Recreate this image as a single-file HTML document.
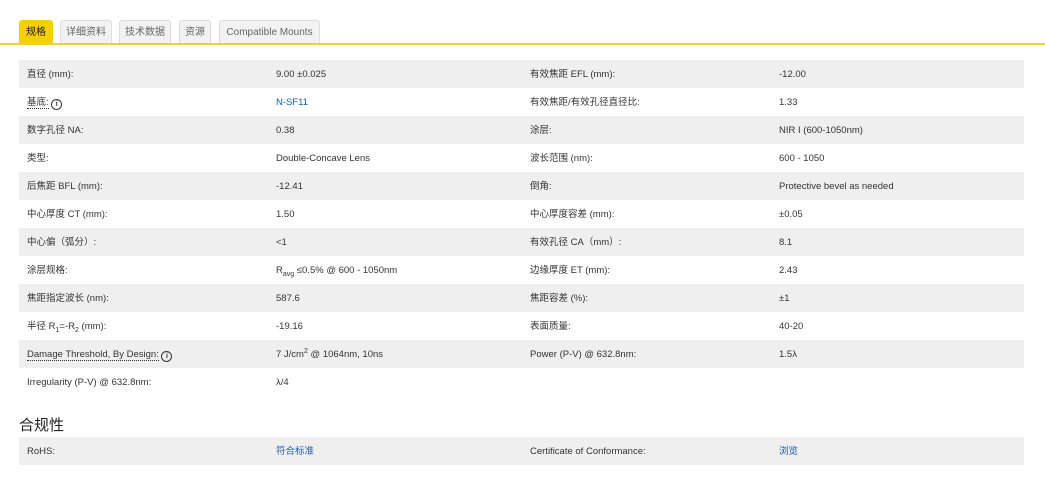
<!DOCTYPE html>
<html><head><meta charset="utf-8"><style>
body{margin:0;background:#fff;font-family:"Liberation Sans","Noto Sans CJK SC",sans-serif;color:#333;width:1045px;height:490px;overflow:hidden;position:relative}
.tabs{position:absolute;top:19px;left:0;width:1045px;height:24px;border-bottom:2px solid #f0d030}
.tab{position:absolute;top:1px;height:23px;background:#f2f2f2;border:1px solid #ddd;border-bottom:none;border-radius:3px 3px 0 0;font-size:10px;color:#666;line-height:24px;text-align:center;box-sizing:border-box}
.tab.a{background:#f5d000;color:#222;border-color:#f5d000}
table{position:absolute;left:19px;width:1005px;border-collapse:collapse;font-size:9.5px;table-layout:fixed}
td{height:26px;padding:2px 0 0 8px;vertical-align:middle;color:#333;line-height:12px;white-space:nowrap}
tr:nth-child(odd) td{background:#efefef}
a{color:#1a5ea8;text-decoration:none}
sub,sup{font-size:7px;line-height:0}
.u{border-bottom:1px dotted #333}
.i{display:inline-block;width:9px;height:9px;border:1.5px solid #333;border-radius:50%;font-size:7px;line-height:9px;text-align:center;font-weight:bold;vertical-align:-1px;box-sizing:content-box}
h3{position:absolute;left:19px;top:414px;margin:0;font-size:15px;font-weight:normal;color:#222}
</style></head><body>
<div class="tabs">
<div class="tab a" style="left:19px;width:34px">规格</div>
<div class="tab" style="left:60px;width:52px">详细资料</div>
<div class="tab" style="left:119px;width:52px">技术数据</div>
<div class="tab" style="left:179px;width:32px">资源</div>
<div class="tab" style="left:219px;width:101px">Compatible Mounts</div>
</div>
<table style="top:60px">
<colgroup><col style="width:249px"><col style="width:254px"><col style="width:249px"><col style="width:253px"></colgroup>
<tr><td>直径 (mm):</td><td>9.00 ±0.025</td><td>有效焦距 EFL (mm):</td><td>-12.00</td></tr>
<tr><td><span class="u">基底:</span> <span class="i">i</span></td><td><a>N-SF11</a></td><td>有效焦距/有效孔径直径比:</td><td>1.33</td></tr>
<tr><td>数字孔径 NA:</td><td>0.38</td><td>涂层:</td><td>NIR I (600-1050nm)</td></tr>
<tr><td>类型:</td><td>Double-Concave Lens</td><td>波长范围 (nm):</td><td>600 - 1050</td></tr>
<tr><td>后焦距 BFL (mm):</td><td>-12.41</td><td>倒角:</td><td>Protective bevel as needed</td></tr>
<tr><td>中心厚度 CT (mm):</td><td>1.50</td><td>中心厚度容差 (mm):</td><td>±0.05</td></tr>
<tr><td>中心偏（弧分）:</td><td>&lt;1</td><td>有效孔径 CA（mm）:</td><td>8.1</td></tr>
<tr><td>涂层规格:</td><td>R<sub>avg</sub> ≤0.5% @ 600 - 1050nm</td><td>边缘厚度 ET (mm):</td><td>2.43</td></tr>
<tr><td>焦距指定波长 (nm):</td><td>587.6</td><td>焦距容差 (%):</td><td>±1</td></tr>
<tr><td>半径 R<sub>1</sub>=-R<sub>2</sub> (mm):</td><td>-19.16</td><td>表面质量:</td><td>40-20</td></tr>
<tr><td><span class="u">Damage Threshold, By Design:</span> <span class="i">i</span></td><td>7 J/cm<sup>2</sup> @ 1064nm, 10ns</td><td>Power (P-V) @ 632.8nm:</td><td>1.5λ</td></tr>
<tr><td style="background:#fff">Irregularity (P-V) @ 632.8nm:</td><td style="background:#fff">λ/4</td><td style="background:#fff"></td><td style="background:#fff"></td></tr>
</table>
<h3>合规性</h3>
<table style="top:437px">
<colgroup><col style="width:249px"><col style="width:254px"><col style="width:249px"><col style="width:253px"></colgroup>
<tr><td>RoHS:</td><td><a>符合标准</a></td><td>Certificate of Conformance:</td><td><a>浏览</a></td></tr>
</table>
</body></html>
